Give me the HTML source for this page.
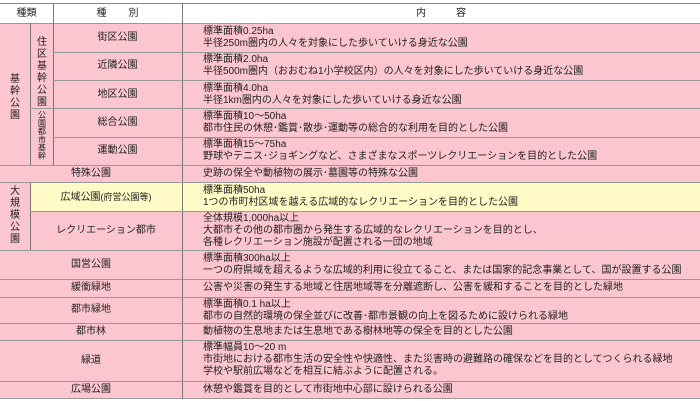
<!DOCTYPE html>
<html><head><meta charset="utf-8"><style>
body{margin:0;width:700px;height:401px;background:#fff;position:relative;overflow:hidden;font-family:"Liberation Sans","Noto Sans CJK JP",sans-serif;font-size:10px;color:#222}
div{position:absolute;box-sizing:border-box}
.p{background:#fcc6d0}
.y{background:#fffac6}
.h{height:1px;background:#999}
.v{width:1px;background:#777}
.c{text-align:center;line-height:12px}
.t{left:203px;line-height:12px;white-space:nowrap}
.vt{width:12px;line-height:11px;text-align:center;font-size:10px}
</style></head><body>
<div class="p" style="left:0;top:23px;width:700px;height:375px"></div>
<div class="y" style="left:30px;top:182px;width:670px;height:29px"></div>
<div class="h" style="left:0;top:3px;width:700px;background:#888"></div>
<div class="h" style="left:0;top:23px;width:700px"></div>
<div class="c" style="left:0;top:8px;width:53px">種類</div>
<div class="c" style="left:53px;top:8px;width:129px;letter-spacing:22px;padding-left:22px">種別</div>
<div class="c" style="left:182px;top:8px;width:518px;letter-spacing:30px;padding-left:30px">内容</div>
<div class="v" style="left:53px;top:3px;height:20px"></div>
<div class="v" style="left:182px;top:3px;height:395px"></div>
<div class="v" style="left:30px;top:23px;height:142px"></div>
<div class="v" style="left:53px;top:23px;height:142px"></div>
<div class="v" style="left:30px;top:182px;height:69px"></div>
<div class="h" style="left:53px;top:52px;width:647px"></div>
<div class="h" style="left:53px;top:80px;width:647px"></div>
<div class="h" style="left:30px;top:108px;width:670px"></div>
<div class="h" style="left:53px;top:137px;width:647px"></div>
<div class="h" style="left:0;top:165px;width:700px"></div>
<div class="h" style="left:0;top:182px;width:700px"></div>
<div class="h" style="left:30px;top:211px;width:670px"></div>
<div class="h" style="left:0;top:250px;width:700px"></div>
<div class="h" style="left:0;top:279px;width:700px"></div>
<div class="h" style="left:0;top:297px;width:700px"></div>
<div class="h" style="left:0;top:323px;width:700px"></div>
<div class="h" style="left:0;top:340px;width:700px"></div>
<div class="h" style="left:0;top:381px;width:700px"></div>
<div class="h" style="left:0;top:398px;width:700px"></div>
<div class="vt" style="left:9px;top:74px;line-height:12px">基<br>幹<br>公<br>園</div>
<div class="vt" style="left:36px;top:37px;line-height:12px">住<br>区<br>基<br>幹<br>公<br>園</div>
<div class="vt" style="left:36px;top:112px;line-height:10px;transform:scale(0.82);transform-origin:50% 0">公<br>園<br>都<br>市<br>基<br>幹</div>
<div class="vt" style="left:9px;top:186px;line-height:12px">大<br>規<br>模<br>公<br>園</div>
<div class="c" style="left:53px;top:32px;width:129px">街区公園</div>
<div class="c" style="left:53px;top:60px;width:129px">近隣公園</div>
<div class="c" style="left:53px;top:89px;width:129px">地区公園</div>
<div class="c" style="left:53px;top:117px;width:129px">総合公園</div>
<div class="c" style="left:53px;top:145px;width:129px">運動公園</div>
<div class="c" style="left:0;top:168px;width:182px">特殊公園</div>
<div class="c" style="left:30px;top:191px;width:152px">広域公園<span style="font-size:9px">(府営公園等)</span></div>
<div class="c" style="left:30px;top:225px;width:152px">レクリエーション都市</div>
<div class="c" style="left:0;top:259px;width:182px">国営公園</div>
<div class="c" style="left:0;top:282px;width:182px">緩衝緑地</div>
<div class="c" style="left:0;top:304px;width:182px">都市緑地</div>
<div class="c" style="left:0;top:326px;width:182px">都市林</div>
<div class="c" style="left:0;top:355px;width:182px">緑道</div>
<div class="c" style="left:0;top:384px;width:182px">広場公園</div>
<div class="t" style="top:26px">標準面積0.25ha<br>半径250m圏内の人々を対象にした歩いていける身近な公園</div>
<div class="t" style="top:54px">標準面積2.0ha<br>半径500m圏内（おおむね1小学校区内）の人々を対象にした歩いていける身近な公園</div>
<div class="t" style="top:83px">標準面積4.0ha<br>半径1km圏内の人々を対象にした歩いていける身近な公園</div>
<div class="t" style="top:111px">標準面積10～50ha<br>都市住民の休憩･鑑賞･散歩･運動等の総合的な利用を目的とした公園</div>
<div class="t" style="top:139px">標準面積15～75ha<br>野球やテニス･ジョギングなど、さまざまなスポーツレクリエーションを目的とした公園</div>
<div class="t" style="top:168px">史跡の保全や動植物の展示･墓園等の特殊な公園</div>
<div class="t" style="top:185px">標準面積50ha<br>1つの市町村区域を越える広域的なレクリエーションを目的とした公園</div>
<div class="t" style="top:213px">全体規模1,000ha以上<br>大都市その他の都市圏から発生する広域的なレクリエーションを目的とし、<br>各種レクリエーション施設が配置される一団の地域</div>
<div class="t" style="top:253px">標準面積300ha以上<br>一つの府県域を超えるような広域的利用に役立てること、または国家的記念事業として、国が設置する公園</div>
<div class="t" style="top:282px">公害や災害の発生する地域と住居地域等を分離遮断し、公害を緩和することを目的とした緑地</div>
<div class="t" style="top:299px">標準面積0.1 ha以上<br>都市の自然的環境の保全並びに改善･都市景観の向上を図るために設けられる緑地</div>
<div class="t" style="top:326px">動植物の生息地または生息地である樹林地等の保全を目的とした公園</div>
<div class="t" style="top:342px">標準幅員10～20 m<br>市街地における都市生活の安全性や快適性、また災害時の避難路の確保などを目的としてつくられる緑地<br>学校や駅前広場などを相互に結ぶように配置される。</div>
<div class="t" style="top:384px">休憩や鑑賞を目的として市街地中心部に設けられる公園</div>
</body></html>
